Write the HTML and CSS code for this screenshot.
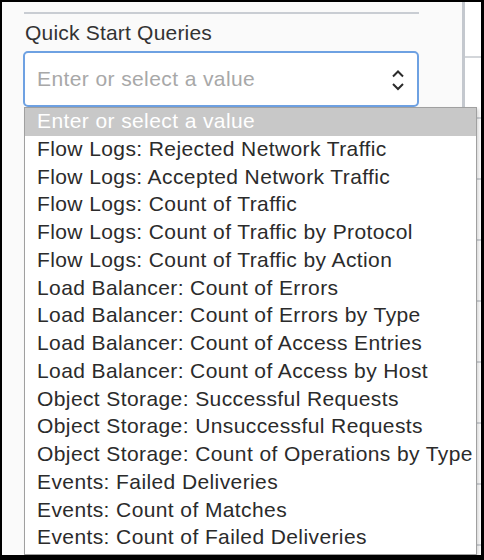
FILE: index.html
```html
<!DOCTYPE html>
<html>
<head>
<meta charset="utf-8">
<link rel="stylesheet" href="styles.css">
</head>
<body>
<div class="frame">
  <div class="main">
    <div class="divider"></div>
    <div class="label">Quick Start Queries</div>
    <div class="combo">
      <span class="placeholder">Enter or select a value</span>
      <svg class="chev" width="14" height="22" viewBox="0 0 14 22">
        <path d="M2 7.5 L7 2.5 L12 7.5" fill="none" stroke="#2b2b2b" stroke-width="2"/>
        <path d="M2 15 L7 20 L12 15" fill="none" stroke="#2b2b2b" stroke-width="2"/>
      </svg>
    </div>
  </div>
  <div class="side">
    <div class="side-row"></div>
    <div class="side-row"></div>
    <div class="side-row"></div>
    <div class="side-row"></div>
    <div class="side-row"></div>
    <div class="side-row"></div>
    <div class="side-row"></div>
    <div class="side-row"></div>
    <div class="side-row"></div>
  </div>
  <ul class="list">
    <li class="opt selected">Enter or select a value</li>
    <li class="opt">Flow Logs: Rejected Network Traffic</li>
    <li class="opt">Flow Logs: Accepted Network Traffic</li>
    <li class="opt">Flow Logs: Count of Traffic</li>
    <li class="opt">Flow Logs: Count of Traffic by Protocol</li>
    <li class="opt">Flow Logs: Count of Traffic by Action</li>
    <li class="opt">Load Balancer: Count of Errors</li>
    <li class="opt">Load Balancer: Count of Errors by Type</li>
    <li class="opt">Load Balancer: Count of Access Entries</li>
    <li class="opt">Load Balancer: Count of Access by Host</li>
    <li class="opt">Object Storage: Successful Requests</li>
    <li class="opt">Object Storage: Unsuccessful Requests</li>
    <li class="opt">Object Storage: Count of Operations by Type</li>
    <li class="opt">Events: Failed Deliveries</li>
    <li class="opt">Events: Count of Matches</li>
    <li class="opt">Events: Count of Failed Deliveries</li>
  </ul>
</div>
</body>
</html>
```
FILE: styles.css
```css
html, body {
  margin: 0;
  padding: 0;
  background: #000;
}
.frame {
  position: relative;
  width: 484px;
  height: 560px;
  box-sizing: border-box;
  border: 2px solid #000;
  border-bottom-width: 5px;
  border-right-width: 3px;
  background: #fafafa;
  display: flex;
  overflow: hidden;
  font-family: "Liberation Sans", Arial, sans-serif;
}
.main {
  width: 460px;
  padding: 10px 43px 0 21px;
  box-sizing: border-box;
}
.divider {
  height: 2px;
  background: #c9cdd3;
  margin-left: 1px;
}
.label {
  margin-top: 7px;
  font-size: 21px;
  line-height: 24px;
  letter-spacing: 0.2px;
  color: #333;
  padding-left: 2px;
}
.combo {
  margin-top: 6px;
  height: 56px;
  box-sizing: border-box;
  border: 2px solid #6ea1e2;
  border-radius: 5px;
  background: #fff;
  display: flex;
  align-items: center;
  justify-content: space-between;
  padding: 0 12px 0 12px;
}
.placeholder {
  font-size: 21px;
  letter-spacing: 0.4px;
  color: #a8a8a8;
}
.chev {
  display: block;
  margin-top: 2px;
}
.side {
  flex: 1;
  border-left: 3px solid #c4c8ce;
  background: #fff;
  display: flex;
  flex-direction: column;
  padding-top: 54px;
}
.side-row {
  height: 59px;
  border-top: 2px solid #d3d6da;
  flex: none;
}
.list {
  position: absolute;
  left: 22px;
  top: 105px;
  width: 453px;
  height: 448px;
  margin: 0;
  padding: 0;
  list-style: none;
  box-sizing: border-box;
  border: 1px solid #a0a0a0;
  background: #fff;
  box-shadow: 2px 2px 3px rgba(0,0,0,0.15);
}
.opt {
  height: 27.75px;
  line-height: 26.5px;
  font-size: 21px;
  letter-spacing: 0.4px;
  color: #2b2b2b;
  padding-left: 12px;
  white-space: nowrap;
}
.opt.selected {
  background: #c8c8c8;
  color: #fff;
}
```
